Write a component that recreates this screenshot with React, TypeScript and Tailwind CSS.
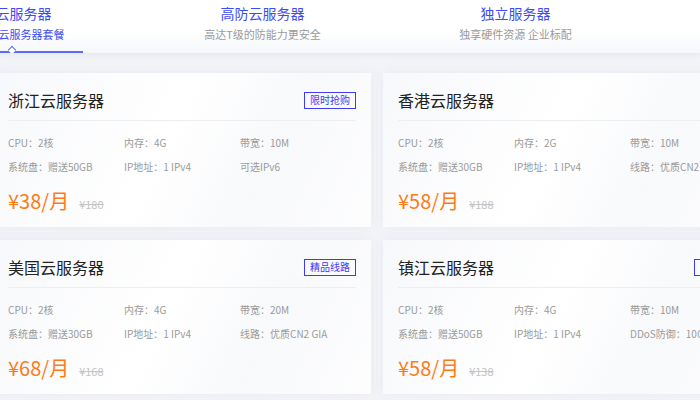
import React from "react";

const tabs = [
  { title: "热门云服务器", sub: "精选热门云服务器套餐", active: true },
  { title: "高防云服务器", sub: "高达T级的防能力更安全", active: false },
  { title: "独立服务器", sub: "独享硬件资源 企业标配", active: false },
];

type Card = {
  name: string;
  badge?: string;
  specs: string[];
  price: string;
  old: string;
};

const cards: Card[] = [
  {
    name: "浙江云服务器",
    badge: "限时抢购",
    specs: ["CPU：2核", "内存：4G", "带宽：10M", "系统盘：赠送50GB", "IP地址：1 IPv4", "可选IPv6"],
    price: "¥38/月",
    old: "¥180",
  },
  {
    name: "香港云服务器",
    specs: ["CPU：2核", "内存：2G", "带宽：10M", "系统盘：赠送30GB", "IP地址：1 IPv4", "线路：优质CN2 GIA"],
    price: "¥58/月",
    old: "¥188",
  },
  {
    name: "美国云服务器",
    badge: "精品线路",
    specs: ["CPU：2核", "内存：4G", "带宽：20M", "系统盘：赠送30GB", "IP地址：1 IPv4", "线路：优质CN2 GIA"],
    price: "¥68/月",
    old: "¥168",
  },
  {
    name: "镇江云服务器",
    badge: "高防护",
    specs: ["CPU：2核", "内存：4G", "带宽：10M", "系统盘：赠送50GB", "IP地址：1 IPv4", "DDoS防御：10G"],
    price: "¥58/月",
    old: "¥138",
  },
];

function ProductCard({ c }: { c: Card }) {
  return (
    <div className="relative overflow-hidden bg-white px-[15px] pt-[17px] pb-[13px] shadow-[0_0_10px_rgba(220,224,235,0.45)] bg-[linear-gradient(115deg,#f7f8fb_0%,#ffffff_45%,#f8f9fb_70%,#fdfdfe_100%)]">
      <div className="flex h-[20px] items-center justify-between">
        <div className="text-[16px] leading-[20px] text-[#222]">{c.name}</div>
        {c.badge && (
          <div className="flex h-[17px] w-[52px] items-center justify-center border-[1.5px] border-[#3c3cf5] text-[10px] leading-none text-[#3c3cf5]">
            {c.badge}
          </div>
        )}
      </div>
      <div className="mt-[10px] h-px bg-[#eceef2]" />
      <div className="mt-[15px] grid grid-cols-3 gap-y-[10px] text-[10px] leading-[14px] text-[#9a9a9a]">
        {c.specs.map((s, i) => (
          <div key={i} className="whitespace-nowrap">
            {s}
          </div>
        ))}
      </div>
      <div className="mt-[14px] flex items-end gap-[10px]">
        <span className="text-[20px] leading-[26px] text-[#ff7a14]">{c.price}</span>
        <span className="mb-[3px] text-[11px] leading-[14px] text-[#c4c4c4] line-through">{c.old}</span>
      </div>
    </div>
  );
}

export default function App() {
  return (
    <div
      className="relative h-[400px] w-[700px] overflow-hidden bg-[#f3f4f8]"
      style={{ fontFamily: '"Noto Sans CJK SC", "Noto Sans", sans-serif' }}
    >
      <div className="relative h-[53px] bg-[linear-gradient(180deg,#ffffff_0%,#ffffff_60%,#f6f7fb_100%)] shadow-[0_2px_6px_rgba(215,220,232,0.6)]">
        <div className="ml-[-117px] flex">
          {tabs.map((t, i) => (
            <div key={i} className="relative flex h-[53px] w-[253px] shrink-0 flex-col items-center">
              <div className="mt-[3px] text-[14px] leading-[20px] text-[#3d4cf2]">{t.title}</div>
              <div className={`mt-[4px] text-[11px] leading-[15px] ${t.active ? "text-[#3d4cf2]" : "text-[#9a9a9a]"}`}>
                {t.sub}
              </div>
              {t.active && (
                <div className="absolute bottom-0 left-[53px] right-[53px] h-[2px] bg-[#5b6cf0]">
                  <div className="absolute left-[73px] top-[-4px] h-[6px] w-[6px] rotate-45 border-l border-t border-[#5b6cf0] bg-white" />
                </div>
              )}
            </div>
          ))}
        </div>
      </div>
      <div className="ml-[-7px] mt-[20px] grid w-[768px] grid-cols-[378px_378px] gap-x-[12px] gap-y-[13px]">
        {cards.map((c, i) => (
          <ProductCard key={i} c={c} />
        ))}
      </div>
    </div>
  );
}
